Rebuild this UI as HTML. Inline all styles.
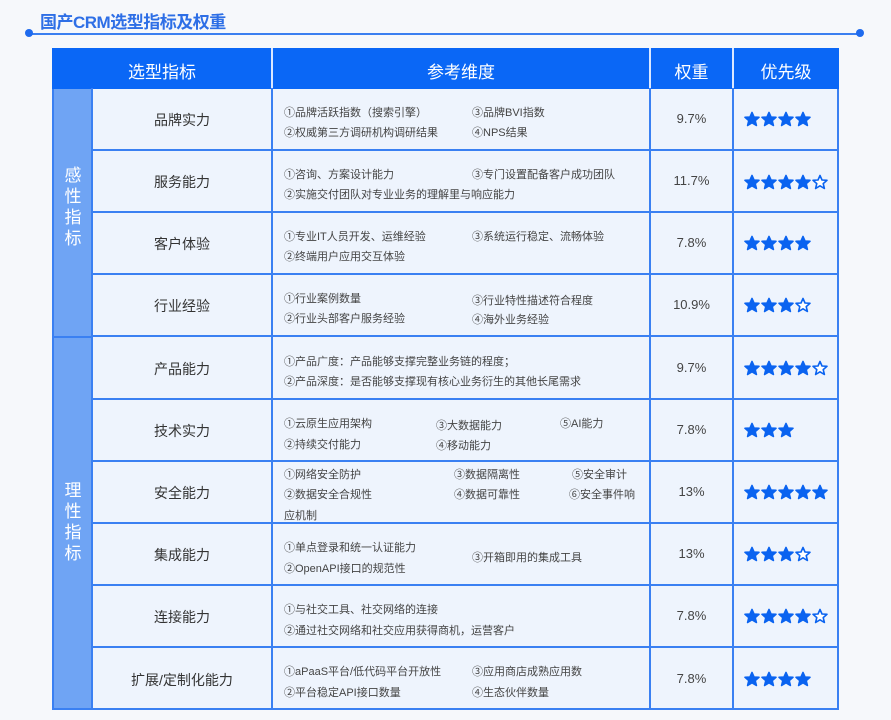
<!DOCTYPE html>
<html><head><meta charset="utf-8"><style>
body{margin:0;width:891px;height:720px;background:#f6f8fb;position:relative;overflow:hidden;font-family:"Liberation Sans","Noto Sans CJK SC",sans-serif}
.a{position:absolute}
.title{left:40px;top:8px;font-size:17px;font-weight:bold;color:#2e6fe6;letter-spacing:-0.5px}
.line{left:28px;top:33px;width:832px;height:2px;background:#3a7ff0}
.dot{width:8px;height:8px;border-radius:50%;background:#1f6bee;top:29px}
.tbl{left:52px;top:48px;width:787px;height:662px;background:#eef4fd;border:2px solid #3a80f2;box-sizing:border-box}
.hd{left:52px;top:48px;width:787px;height:41px;background:#0a67f6}
.hdt{color:#fff;font-size:17px;top:58px;text-align:center}
.vl{width:2px;background:#3a80f2}
.hl{height:2px;background:#3a80f2}
.grp{background:#6fa4f4;left:54px;width:38px}
.gt{color:#fff;font-size:17px;width:38px;left:54px;text-align:center;line-height:21px}
.ind{left:92px;width:180px;text-align:center;font-size:14px;color:#333}
.d{font-size:11px;color:#444;white-space:nowrap}
.w{left:650px;width:83px;text-align:center;font-size:13px;color:#444}
.s{left:744px}
</style></head><body>
<div class="a title">国产CRM选型指标及权重</div>
<div class="a line"></div>
<div class="a dot" style="left:25px"></div>
<div class="a dot" style="left:856px"></div>
<div class="a tbl"></div>
<div class="a hd"></div>
<div class="a hdt" style="left:52px;width:220px">选型指标</div>
<div class="a hdt" style="left:272px;width:378px">参考维度</div>
<div class="a hdt" style="left:650px;width:83px">权重</div>
<div class="a hdt" style="left:733px;width:106px">优先级</div>
<div class="a vl" style="left:271px;top:48px;height:41px;background:#dbe8ff"></div>
<div class="a vl" style="left:649px;top:48px;height:41px;background:#dbe8ff"></div>
<div class="a vl" style="left:732px;top:48px;height:41px;background:#dbe8ff"></div>
<div class="a grp" style="top:89px;height:247px"></div>
<div class="a grp" style="top:338px;height:370px"></div>
<div class="a hl" style="left:54px;top:336px;width:38px"></div>
<div class="a gt" style="top:165px">感<br>性<br>指<br>标</div>
<div class="a gt" style="top:480px">理<br>性<br>指<br>标</div>
<div class="a vl" style="left:91px;top:88px;height:622px"></div>
<div class="a vl" style="left:271px;top:88px;height:622px"></div>
<div class="a vl" style="left:649px;top:88px;height:622px"></div>
<div class="a vl" style="left:732px;top:88px;height:622px"></div>
<div class="a hl" style="left:92px;top:149px;width:747px"></div>
<div class="a hl" style="left:92px;top:211px;width:747px"></div>
<div class="a hl" style="left:92px;top:273px;width:747px"></div>
<div class="a hl" style="left:92px;top:335px;width:747px"></div>
<div class="a hl" style="left:92px;top:398px;width:747px"></div>
<div class="a hl" style="left:92px;top:460px;width:747px"></div>
<div class="a hl" style="left:92px;top:522px;width:747px"></div>
<div class="a hl" style="left:92px;top:584px;width:747px"></div>
<div class="a hl" style="left:92px;top:646px;width:747px"></div>

<svg width="0" height="0" style="position:absolute"><defs>
<polygon id="st" points="8,1.5 10,6 15,6.3 11.2,9.6 12.4,14.5 8,11.8 3.6,14.5 4.8,9.6 1,6.3 6,6" stroke-linejoin="round" stroke-width="1.6"/>
</defs></svg>

<!-- row1 -->
<div class="a ind" style="top:110px">品牌实力</div>
<div class="a d" style="left:284px;top:104px">①品牌活跃指数（搜索引擎）</div>
<div class="a d" style="left:284px;top:124px">②权威第三方调研机构调研结果</div>
<div class="a d" style="left:472px;top:104px">③品牌BVI指数</div>
<div class="a d" style="left:472px;top:124px">④NPS结果</div>
<div class="a w" style="top:111px">9.7%</div>
<svg class="a s" style="top:111px" width="90" height="17"><g fill="#0a63f0" stroke="#0a63f0"><use href="#st"/><use href="#st" x="17"/><use href="#st" x="34"/><use href="#st" x="51"/></g></svg>
<!-- row2 -->
<div class="a ind" style="top:172px">服务能力</div>
<div class="a d" style="left:284px;top:166px">①咨询、方案设计能力</div>
<div class="a d" style="left:284px;top:186px">②实施交付团队对专业业务的理解里与响应能力</div>
<div class="a d" style="left:472px;top:166px">③专门设置配备客户成功团队</div>
<div class="a w" style="top:173px">11.7%</div>
<svg class="a s" style="top:174px" width="90" height="17"><g fill="#0a63f0" stroke="#0a63f0"><use href="#st"/><use href="#st" x="17"/><use href="#st" x="34"/><use href="#st" x="51"/><use href="#st" x="68" fill="#fff"/></g></svg>
<!-- row3 -->
<div class="a ind" style="top:234px">客户体验</div>
<div class="a d" style="left:284px;top:228px">①专业IT人员开发、运维经验</div>
<div class="a d" style="left:284px;top:248px">②终端用户应用交互体验</div>
<div class="a d" style="left:472px;top:228px">③系统运行稳定、流畅体验</div>
<div class="a w" style="top:235px">7.8%</div>
<svg class="a s" style="top:235px" width="90" height="17"><g fill="#0a63f0" stroke="#0a63f0"><use href="#st"/><use href="#st" x="17"/><use href="#st" x="34"/><use href="#st" x="51"/></g></svg>
<!-- row4 -->
<div class="a ind" style="top:296px">行业经验</div>
<div class="a d" style="left:284px;top:290px">①行业案例数量</div>
<div class="a d" style="left:284px;top:310px">②行业头部客户服务经验</div>
<div class="a d" style="left:472px;top:292px">③行业特性描述符合程度</div>
<div class="a d" style="left:472px;top:311px">④海外业务经验</div>
<div class="a w" style="top:297px">10.9%</div>
<svg class="a s" style="top:297px" width="90" height="17"><g fill="#0a63f0" stroke="#0a63f0"><use href="#st"/><use href="#st" x="17"/><use href="#st" x="34"/><use href="#st" x="51" fill="#fff"/></g></svg>
<!-- row5 -->
<div class="a ind" style="top:359px">产品能力</div>
<div class="a d" style="left:284px;top:353px">①产品广度：产品能够支撑完整业务链的程度；</div>
<div class="a d" style="left:284px;top:373px">②产品深度：是否能够支撑现有核心业务衍生的其他长尾需求</div>
<div class="a w" style="top:360px">9.7%</div>
<svg class="a s" style="top:360px" width="90" height="17"><g fill="#0a63f0" stroke="#0a63f0"><use href="#st"/><use href="#st" x="17"/><use href="#st" x="34"/><use href="#st" x="51"/><use href="#st" x="68" fill="#fff"/></g></svg>
<!-- row6 -->
<div class="a ind" style="top:421px">技术实力</div>
<div class="a d" style="left:284px;top:415px">①云原生应用架构</div>
<div class="a d" style="left:284px;top:436px">②持续交付能力</div>
<div class="a d" style="left:436px;top:417px">③大数据能力</div>
<div class="a d" style="left:436px;top:437px">④移动能力</div>
<div class="a d" style="left:560px;top:415px">⑤AI能力</div>
<div class="a w" style="top:422px">7.8%</div>
<svg class="a s" style="top:422px" width="90" height="17"><g fill="#0a63f0" stroke="#0a63f0"><use href="#st"/><use href="#st" x="17"/><use href="#st" x="34"/></g></svg>
<!-- row7 -->
<div class="a ind" style="top:483px">安全能力</div>
<div class="a d" style="left:284px;top:466px">①网络安全防护</div>
<div class="a d" style="left:284px;top:486px">②数据安全合规性</div>
<div class="a d" style="left:284px;top:507px">应机制</div>
<div class="a d" style="left:454px;top:466px">③数据隔离性</div>
<div class="a d" style="left:454px;top:486px">④数据可靠性</div>
<div class="a d" style="left:572px;top:466px">⑤安全审计</div>
<div class="a d" style="left:569px;top:486px">⑥安全事件响</div>
<div class="a w" style="top:484px">13%</div>
<svg class="a s" style="top:484px" width="90" height="17"><g fill="#0a63f0" stroke="#0a63f0"><use href="#st"/><use href="#st" x="17"/><use href="#st" x="34"/><use href="#st" x="51"/><use href="#st" x="68"/></g></svg>
<!-- row8 -->
<div class="a ind" style="top:545px">集成能力</div>
<div class="a d" style="left:284px;top:539px">①单点登录和统一认证能力</div>
<div class="a d" style="left:284px;top:560px">②OpenAPI接口的规范性</div>
<div class="a d" style="left:472px;top:549px">③开箱即用的集成工具</div>
<div class="a w" style="top:546px">13%</div>
<svg class="a s" style="top:546px" width="90" height="17"><g fill="#0a63f0" stroke="#0a63f0"><use href="#st"/><use href="#st" x="17"/><use href="#st" x="34"/><use href="#st" x="51" fill="#fff"/></g></svg>
<!-- row9 -->
<div class="a ind" style="top:607px">连接能力</div>
<div class="a d" style="left:284px;top:601px">①与社交工具、社交网络的连接</div>
<div class="a d" style="left:284px;top:622px">②通过社交网络和社交应用获得商机，运营客户</div>
<div class="a w" style="top:608px">7.8%</div>
<svg class="a s" style="top:608px" width="90" height="17"><g fill="#0a63f0" stroke="#0a63f0"><use href="#st"/><use href="#st" x="17"/><use href="#st" x="34"/><use href="#st" x="51"/><use href="#st" x="68" fill="#fff"/></g></svg>
<!-- row10 -->
<div class="a ind" style="top:670px">扩展/定制化能力</div>
<div class="a d" style="left:284px;top:663px">①aPaaS平台/低代码平台开放性</div>
<div class="a d" style="left:284px;top:684px">②平台稳定API接口数量</div>
<div class="a d" style="left:472px;top:663px">③应用商店成熟应用数</div>
<div class="a d" style="left:472px;top:684px">④生态伙伴数量</div>
<div class="a w" style="top:671px">7.8%</div>
<svg class="a s" style="top:671px" width="90" height="17"><g fill="#0a63f0" stroke="#0a63f0"><use href="#st"/><use href="#st" x="17"/><use href="#st" x="34"/><use href="#st" x="51"/></g></svg>
</body></html>
